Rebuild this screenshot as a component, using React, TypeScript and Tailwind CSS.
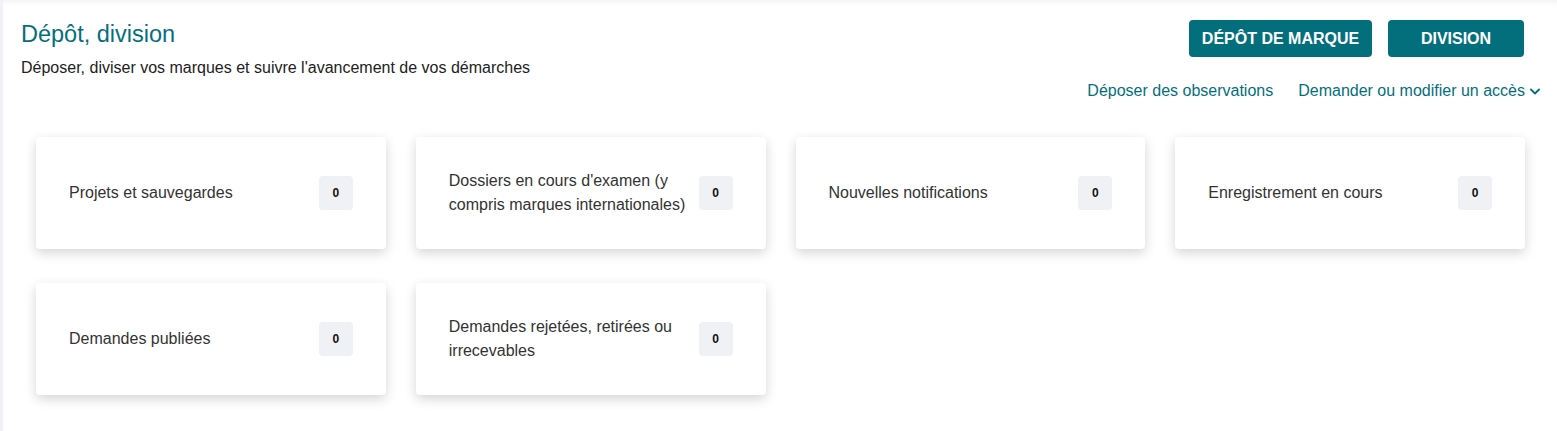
import React from "react";

const cards: { label: string; count: number }[] = [
  { label: "Projets et sauvegardes", count: 0 },
  { label: "Dossiers en cours d'examen (y compris marques internationales)", count: 0 },
  { label: "Nouvelles notifications", count: 0 },
  { label: "Enregistrement en cours", count: 0 },
  { label: "Demandes publiées", count: 0 },
  { label: "Demandes rejetées, retirées ou irrecevables", count: 0 },
];

function Card({ label, count }: { label: string; count: number }) {
  return (
    <div className="flex h-[112px] items-center gap-[10px] rounded-[4px] bg-white pl-[33px] pr-[33px] shadow-[0_4px_12px_rgba(0,0,0,0.17)]">
      <div className="flex-1 text-[16px] leading-[24px] text-[#333]">{label}</div>
      <div className="flex h-[34px] w-[34px] shrink-0 items-center justify-center rounded-[4px] bg-[#f0f1f5] text-[12px] font-bold text-[#111]">
        {count}
      </div>
    </div>
  );
}

export default function App() {
  return (
    <div className="flex min-h-[431px] w-full bg-white font-['Liberation_Sans',Arial,sans-serif]">
      <div className="w-[3px] shrink-0 bg-[#f1f2f5]" />
      <div className="flex-1 pb-[36px] shadow-[inset_0_7px_7px_-6px_rgba(0,0,0,0.07)]">
        <div className="flex justify-between pl-[18px] pr-[17px] pt-[20px]">
          <div className="flex flex-col">
            <h1 className="text-[23.5px] leading-[28px] text-[#046f7c]">Dépôt, division</h1>
            <p className="mt-[8px] text-[16px] leading-[24px] text-[#222]">
              Déposer, diviser vos marques et suivre l'avancement de vos démarches
            </p>
          </div>
          <div className="flex flex-col items-end">
            <div className="mr-[16px] flex gap-[16px]">
              <button className="h-[37px] w-[183px] rounded-[4px] bg-[#046f7c] text-[16px] font-bold text-white">
                DÉPÔT DE MARQUE
              </button>
              <button className="h-[37px] w-[136px] rounded-[4px] bg-[#046f7c] text-[16px] font-bold text-white">
                DIVISION
              </button>
            </div>
            <div className="mt-[22px] flex items-center gap-[25px] text-[16px] leading-[24px] text-[#046f7c]">
              <span>Déposer des observations</span>
              <span className="flex items-center gap-[5px]">
                Demander ou modifier un accès
                <svg width="10" height="7" viewBox="0 0 10 7" fill="none">
                  <polyline points="1,1.5 5,5.5 9,1.5" stroke="#046f7c" strokeWidth="1.8" strokeLinecap="round" strokeLinejoin="round" />
                </svg>
              </span>
            </div>
          </div>
        </div>
        <div className="mt-[34px] grid grid-cols-4 gap-x-[30px] gap-y-[34px] pl-[33px] pr-[32px]">
          {cards.map((c) => (
            <Card key={c.label} label={c.label} count={c.count} />
          ))}
        </div>
      </div>
    </div>
  );
}
